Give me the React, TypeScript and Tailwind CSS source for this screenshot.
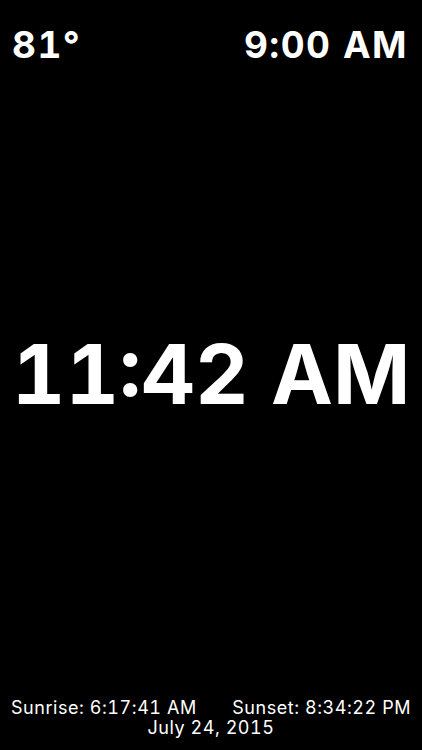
export default function App() {
  return (
    <div
      className="flex h-[750px] w-[422px] flex-col bg-black text-white tabular-nums"
      style={{ fontFamily: 'Inter, "Liberation Sans", Arial, sans-serif' }}
    >
      <div className="flex items-start justify-between pl-3 pr-[14px] pt-[22px]">
        <span className="text-[37px] font-bold leading-[46px] tracking-[0.04em]">81°</span>
        <span className="text-[37px] font-bold leading-[46px] tracking-[0.04em]">9:00 AM</span>
      </div>

      <div className="flex flex-1 items-center justify-center">
        <span className="mb-[18px] whitespace-nowrap text-[83px] font-bold leading-none">
          11:42 AM
        </span>
      </div>

      <div className="flex flex-col pb-[12px] text-[18px] leading-[20px] tracking-[0.03em]">
        <div className="flex justify-between px-[11px]">
          <span>Sunrise: 6:17:41 AM</span>
          <span>Sunset: 8:34:22 PM</span>
        </div>
        <div className="text-center">July 24, 2015</div>
      </div>
    </div>
  );
}
